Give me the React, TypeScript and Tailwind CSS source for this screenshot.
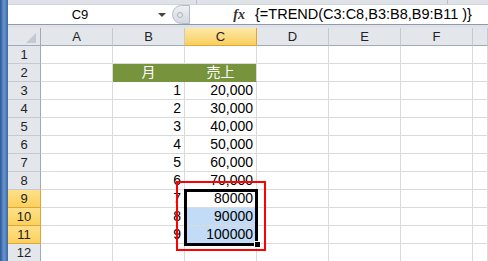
import React from "react";

const cols = ["A", "B", "C", "D", "E", "F", ""];
const bVals: Record<number, string> = { 3: "1", 4: "2", 5: "3", 6: "4", 7: "5", 8: "6", 9: "7", 10: "8", 11: "9" };
const cVals: Record<number, string> = {
  3: "20,000", 4: "30,000", 5: "40,000", 6: "50,000", 7: "60,000", 8: "70,000",
  9: "80000", 10: "90000", 11: "100000",
};

function RowHeader({ n }: { n: number }) {
  const sel = n >= 9 && n <= 11;
  return (
    <div
      className={
        sel
          ? "h-[18px] flex items-center justify-center border-r border-b border-r-[#e3a33b] border-b-[#e3a33b] bg-gradient-to-b from-[#ffe08a] to-[#fbd15a] text-[13px] leading-none text-[#222]"
          : "h-[18px] flex items-center justify-center border-r border-b border-r-[#9eaab8] border-b-[#c3cad3] bg-[#e3e7ec] text-[13px] leading-none text-[#222]"
      }
    >
      {n}
    </div>
  );
}

function Cell({ r, c }: { r: number; c: number }) {
  let text = "";
  let cls = "h-[18px] flex items-end justify-end pr-[3px] border-r border-b border-[#dadada] text-[14px] leading-[17px] text-black bg-white";
  if (r === 2 && (c === 1 || c === 2)) {
    cls = "h-[18px] flex items-end justify-center border-r border-b border-[#77933c] text-[14px] leading-[17px] text-white bg-[#77933c]";
    text = c === 1 ? "月" : "売上";
    if (c === 2) cls = "h-[18px] flex items-end justify-center border-b border-r border-b-[#77933c] border-r-[#dadada] text-[14px] leading-[17px] text-white bg-[#77933c]";
  } else if (c === 1 && bVals[r]) {
    text = bVals[r];
  } else if (c === 2 && cVals[r]) {
    text = cVals[r];
    if (r === 10 || r === 11) {
      cls = "h-[18px] flex items-end justify-end pr-[3px] border-r border-b border-[#dadada] text-[14px] leading-[17px] text-black bg-[#c2dbf7]";
    }
  }
  return <div className={cls}>{text}</div>;
}

export default function App() {
  const rows = Array.from({ length: 12 }, (_, i) => i + 1);
  return (
    <div className="w-[488px] h-[261px] overflow-hidden flex bg-[#dfe3e8] font-['Liberation_Sans','Noto_Sans_CJK_JP',sans-serif]">
      <div className="w-[8px] h-full shrink-0 bg-gradient-to-r from-[#2b5797] via-[#6a96cf] to-[#3b68a6]" />
      <div className="flex-1 flex flex-col min-w-0">
        <div className="h-[4px] flex shrink-0">
          <div className="w-[189px] border-r border-[#b6bec9]" />
          <div className="w-[251px] border-r border-[#b6bec9]" />
        </div>
        <div className="h-[21px] shrink-0 flex bg-white border-t border-b border-t-[#cfd4db] border-b-[#8e9aab]">
          <div className="w-[164px] flex items-center">
            <span className="flex-1 text-center text-[13px] leading-none text-black">C9</span>
            <span className="w-[20px] flex justify-center">
              <span className="w-0 h-0 border-l-[4px] border-r-[4px] border-t-[4px] border-l-transparent border-r-transparent border-t-[#444]" />
            </span>
          </div>
          <div className="w-[18px] h-full rounded-l-full bg-gradient-to-b from-[#eef0f3] to-[#d4d9e0] border border-[#b4bcc8] flex items-center pl-[4px]">
            <span className="w-[6px] h-[6px] rounded-full border border-[#a9b1bc] bg-[#e6e9ed]" />
          </div>
          <div className="w-[58px] flex items-center justify-end pr-[3px]">
            <span className="font-['Liberation_Serif',serif] italic font-bold text-[14px] leading-none text-[#333]">fx</span>
          </div>
          <div className="flex-1 flex items-center pl-[7px] text-[14.5px] leading-none text-black whitespace-nowrap">
            {"{=TREND(C3:C8,B3:B8,B9:B11 )}"}
          </div>
        </div>
        <div className="h-[3px] shrink-0" />
        <div className="relative grid grid-cols-[33px_repeat(6,72px)_1fr]">
          {/* corner */}
          <div className="h-[18px] border-r border-b border-[#9eaab8] bg-[#e3e7ec] flex items-end justify-end pr-[4px] pb-[2px]">
            <svg width="10" height="10" viewBox="0 0 10 10">
              <polygon points="10,0 10,10 0,10" fill="#c3c9d1" />
            </svg>
          </div>
          {cols.map((c, i) =>
            i === 2 ? (
              <div
                key={i}
                className="h-[18px] flex items-center justify-center border-r border-b border-r-[#e3a33b] border-b-[#e3a33b] bg-gradient-to-b from-[#fde8a6] to-[#f9cf5b] text-[13px] leading-none text-[#222]"
              >
                {c}
              </div>
            ) : (
              <div
                key={i}
                className="h-[18px] flex items-center justify-center border-r border-b border-r-[#c3cad3] border-b-[#9eaab8] bg-[#e3e7ec] text-[13px] leading-none text-[#222]"
              >
                {c}
              </div>
            )
          )}
          {rows.map((r) => (
            <React.Fragment key={r}>
              <RowHeader n={r} />
              {cols.map((_, c) => (
                <Cell key={c} r={r} c={c} />
              ))}
            </React.Fragment>
          ))}
          {/* selection border */}
          <div className="absolute left-[176px] top-[161px] w-[74px] h-[57px] border-[3px] border-black pointer-events-none" />
          <div className="absolute left-[246px] top-[213px] w-[7px] h-[7px] bg-black border border-white pointer-events-none" />
          {/* red annotation */}
          <div className="absolute left-[168px] top-[153px] w-[90px] h-[70px] border-2 border-[#ff0000] pointer-events-none" />
        </div>
      </div>
    </div>
  );
}
